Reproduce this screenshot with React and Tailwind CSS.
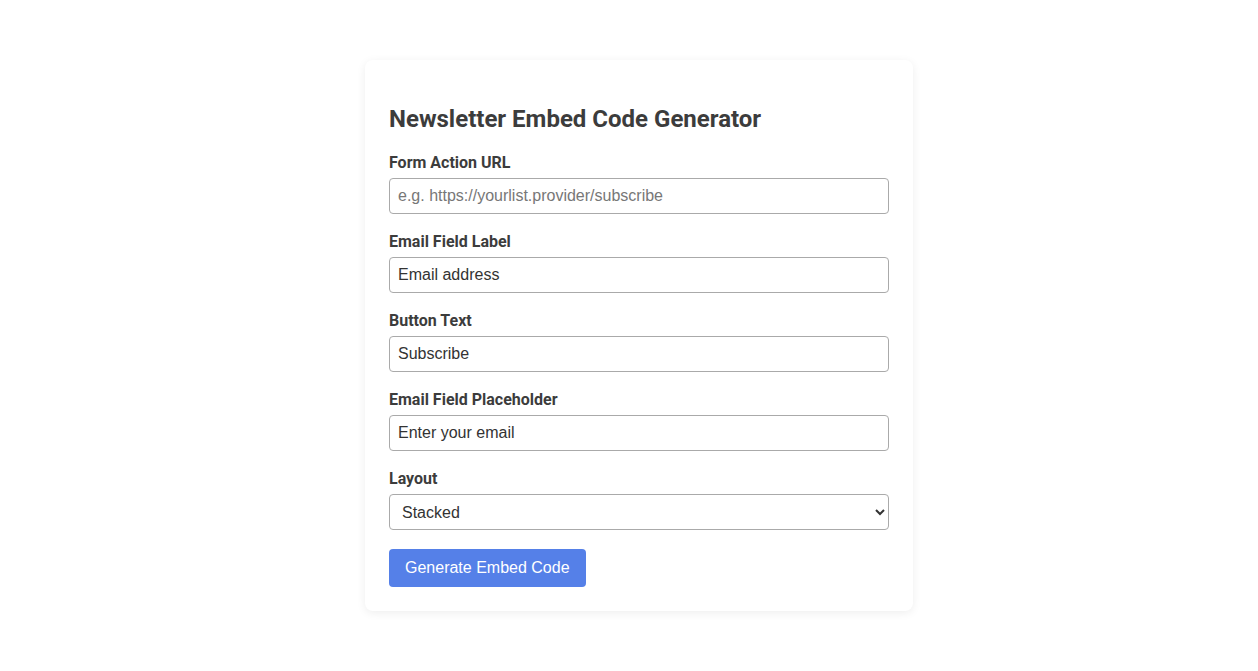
import { useState } from "react";

// Campos del formulario del generador
const fields = [
  { id: "action", label: "Form Action URL", placeholder: "e.g. https://yourlist.provider/subscribe", value: "" },
  { id: "label", label: "Email Field Label", value: "Email address" },
  { id: "button", label: "Button Text", value: "Subscribe" },
  { id: "ph", label: "Email Field Placeholder", value: "Enter your email" },
];

export default function App() {
  const [values, setValues] = useState(
    Object.fromEntries(fields.map((f) => [f.id, f.value]))
  );
  const [layout, setLayout] = useState("stacked");

  return (
    <div className="min-h-screen bg-white pt-[60px] pl-[20px] text-[#3c3c3c] font-['Roboto',sans-serif]">
      <div className="mx-auto w-[548px] rounded-lg bg-white p-6 shadow-[0_2px_10px_rgba(0,0,0,0.07)]">
        <h2 className="mt-[21px] mb-[20px] text-2xl font-bold leading-[28px]">Newsletter Embed Code Generator</h2>

        {fields.map((f) => (
          <div key={f.id}>
            <label htmlFor={f.id} className="mb-[6px] block text-base font-bold leading-[19px]">
              {f.label}
            </label>
            <input
              id={f.id}
              type="text"
              placeholder={f.placeholder}
              value={values[f.id]}
              onChange={(e) => setValues({ ...values, [f.id]: e.target.value })}
              className="mb-[18px] block h-[36px] w-full rounded border border-[#aaa] px-2 font-['Liberation_Sans',Arial,sans-serif] text-base text-[#333] placeholder:text-[#777] outline-none"
            />
          </div>
        ))}

        <label htmlFor="layout" className="mb-[6px] block text-base font-bold leading-[19px]">
          Layout
        </label>
        <select
          id="layout"
          value={layout}
          onChange={(e) => setLayout(e.target.value)}
          className="mb-[19px] block h-[36px] w-full rounded border border-[#aaa] bg-white px-2 font-['Liberation_Sans',Arial,sans-serif] text-base text-[#333] outline-none"
        >
          <option value="stacked">Stacked</option>
          <option value="inline">Inline</option>
        </select>

        <button className="h-[38px] rounded bg-[#5580e8] px-4 font-['Liberation_Sans',Arial,sans-serif] text-base text-white">
          Generate Embed Code
        </button>
      </div>
    </div>
  );
}
